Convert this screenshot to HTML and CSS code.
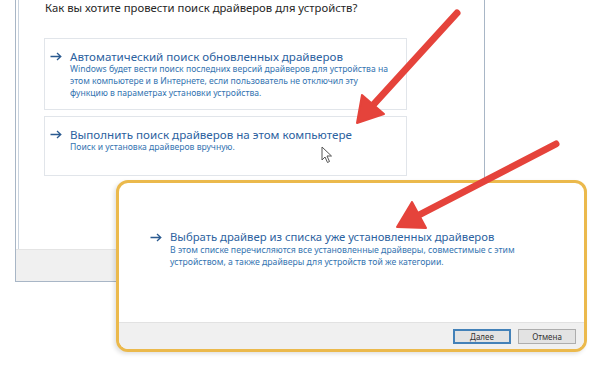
FILE: index.html
```html
<!DOCTYPE html>
<html lang="ru">
<head>
<meta charset="utf-8">
<link rel="stylesheet" href="styles.css">
</head>
<body>
<div class="stage">
  <div class="dlg">
    <div class="dlg-title">Как вы хотите провести поиск драйверов для устройств?</div>
    <div class="options">
      <div class="opt opt-auto">
        <div class="opt-head"><svg class="arr" width="12" height="9" viewBox="0 0 12 9"><path d="M0.5 4.5 H10.5 M7 1 L10.8 4.5 L7 8" fill="none" stroke="#2a5a90" stroke-width="1.3"/></svg>Автоматический поиск обновленных драйверов</div>
        <div class="opt-desc">Windows будет вести поиск последних версий драйверов для устройства на<br>этом компьютере и в Интернете, если пользователь не отключил эту<br>функцию в параметрах установки устройства.</div>
      </div>
      <div class="opt opt-manual">
        <div class="opt-head"><svg class="arr" width="12" height="9" viewBox="0 0 12 9"><path d="M0.5 4.5 H10.5 M7 1 L10.8 4.5 L7 8" fill="none" stroke="#2a5a90" stroke-width="1.3"/></svg>Выполнить поиск драйверов на этом компьютере</div>
        <div class="opt-desc">Поиск и установка драйверов вручную.</div>
      </div>
    </div>
    <div class="dlg-foot"></div>
  </div>

  <div class="dlg2">
    <div class="dlg2-body">
      <div class="opt-head opt-head2"><svg class="arr" width="12" height="9" viewBox="0 0 12 9"><path d="M0.5 4.5 H10.5 M7 1 L10.8 4.5 L7 8" fill="none" stroke="#2a5a90" stroke-width="1.3"/></svg>Выбрать драйвер из списка уже установленных драйверов</div>
      <div class="opt-desc opt-desc2">В этом списке перечисляются все установленные драйверы, совместимые с этим<br>устройством, а также драйверы для устройств той же категории.</div>
    </div>
    <div class="dlg2-foot">
      <span class="btn btn-primary">Далее</span>
      <span class="btn">Отмена</span>
    </div>
  </div>

  <svg class="cursor" width="12" height="18" viewBox="0 0 12 18">
    <path d="M1 1 L1 14 L4 11 L6.5 16.5 L8.5 15.5 L6 10 L10.5 10 Z" fill="#fff" stroke="#555" stroke-width="1" stroke-linejoin="round"/>
  </svg>

  <svg class="arrows" width="600" height="367" viewBox="0 0 600 367">
    <g stroke="#e5433b" stroke-width="7" stroke-linecap="round" fill="none">
      <line x1="457" y1="13" x2="374" y2="104"/>
      <line x1="556" y1="144" x2="419" y2="215"/>
    </g>
    <g fill="#e5433b" stroke="#e5433b" stroke-width="2" stroke-linejoin="round">
      <polygon points="357,123 384,114 362,95"/>
      <polygon points="397,227 426,228 412,202"/>
    </g>
  </svg>
</div>
</body>
</html>
```

FILE: styles.css
```css
* { box-sizing: border-box; }
html, body { margin: 0; padding: 0; background: #ffffff; }
body { font-family: "Noto Sans", "Open Sans", sans-serif; overflow: hidden; }

.stage {
  position: relative;
  width: 600px;
  height: 367px;
  overflow: hidden;
  background: #ffffff;
}

/* first (background) dialog */
.dlg {
  margin-left: 15px;
  width: 470px;
  height: 282px;
  border: 1px solid #a8b6c6;
  border-top: none;
  box-shadow: inset 2px 0 0 #ffffff, inset 3px 0 0 #c9d3de;
  display: flex;
  flex-direction: column;
  background: #ffffff;
}
.dlg-title {
  padding-left: 29px;
  height: 38px;
  font-size: 11.3px;
  line-height: 16px;
  color: #262626;
}
.options {
  margin-left: 28px;
  width: 363px;
  display: flex;
  flex-direction: column;
  gap: 6px;
}
.opt {
  border: 1px solid #e1e5ea;
  padding-left: 5px;
}
.opt-auto { height: 72px; padding-top: 10px; }
.opt-manual { height: 60px; padding-top: 10px; }

.opt-head {
  font-size: 11.6px;
  line-height: 15px;
  color: #2c62a0;
  white-space: nowrap;
  display: flex;
  align-items: center;
}
.arr {
  flex: none;
  margin-right: 8px;
}
.opt-desc {
  padding-left: 20px;
  font-size: 8.6px;
  line-height: 11.8px;
  color: #3474b1;
  white-space: nowrap;
}
.dlg-foot {
  margin-top: auto;
  height: 32px;
  background: #f0f0f0;
  border-top: 1px solid #e4e4e4;
}

/* highlighted dialog */
.dlg2 {
  position: absolute;
  left: 116px;
  top: 180px;
  width: 471px;
  height: 172px;
  border: 3px solid #ebb94c;
  border-radius: 12px;
  background: #ffffff;
  overflow: hidden;
  display: flex;
  flex-direction: column;
  box-shadow: -2px 2px 4px rgba(0,0,0,0.12);
}
.dlg2-body {
  flex: 1;
  padding: 47px 0 0 31px;
}
.opt-head2 { font-size: 11.3px; line-height: 14px; }
.opt-desc2 { font-size: 8.7px; line-height: 12px; }
.dlg2-foot {
  height: 27px;
  background: #f0f0f0;
  border-top: 1px solid #e2e2e2;
  display: flex;
  justify-content: flex-end;
  align-items: center;
  gap: 7px;
  padding-right: 8px;
}
.btn {
  width: 58px;
  height: 15px;
  background: #e3e3e3;
  border: 1px solid #adadad;
  font-size: 8px;
  line-height: 13px;
  text-align: center;
  color: #333;
}
.btn-primary {
  border: 2px solid #4381b8;
  line-height: 11px;
}

.cursor {
  position: absolute;
  left: 321px;
  top: 146px;
}
.arrows {
  position: absolute;
  left: 0;
  top: 0;
  pointer-events: none;
}
```
